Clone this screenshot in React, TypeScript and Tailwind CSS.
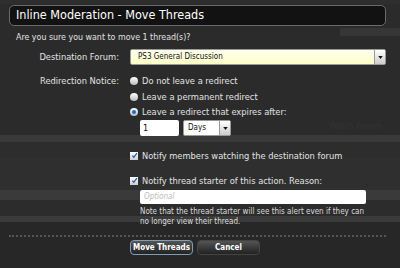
import React from "react";

const Radio = ({ checked }: { checked?: boolean }) => (
	<span className="inline-flex h-[8px] w-[8px] shrink-0 items-center justify-center rounded-full bg-gradient-to-b from-white to-[#bbb]">
		{checked && <span className="h-[4px] w-[4px] rounded-full bg-[#1a6fc0]" />}
	</span>
);

const Check = () => (
	<span className="inline-flex h-[8px] w-[8px] shrink-0 items-center justify-center bg-gradient-to-b from-white to-[#ccc]">
		<svg viewBox="0 0 8 8" className="h-[7px] w-[7px]">
			<path d="M1.5 4.2 L3.2 6 L6.8 1.2" fill="none" stroke="#2457b8" strokeWidth="1.4" />
		</svg>
	</span>
);

const Arrow = () => (
	<span className="flex h-full w-[11px] items-center justify-center border-l border-[#999] bg-gradient-to-b from-white to-[#ccc]">
		<svg viewBox="0 0 6 4" className="h-[3px] w-[5px]">
			<path d="M0 0 H6 L3 4 Z" fill="#111" />
		</svg>
	</span>
);

const Background = () => (
	<div className="flex h-[268px] flex-col bg-[#2b2b2b] text-[#333] [font-family:'DejaVu_Sans_Condensed','DejaVu_Sans',sans-serif]">
		<div className="h-[4px] bg-[#2e2e2e]" />
		<div className="h-[24px]" />
		<div className="ml-auto h-[8px] w-[60px] bg-[#363636]" />
		<div className="h-[84px]" />
		<div className="flex h-[13px] items-center justify-end pr-[18px] text-[9px]">Watch Forum</div>
		<div className="h-[2px]" />
		<div className="h-[7px] bg-[#3a3a3a]" />
		<div className="h-[16px] bg-[#2d2d2d]" />
		<div className="h-[32px] bg-[#2f2f2f]" />
		<div className="h-[10px] bg-[#3a3a3a]" />
		<div className="h-[16px] bg-[#2c2c2c]" />
		<div className="h-[6px] bg-[#3b3b3b]" />
		<div className="flex-1 bg-[#272727]" />
	</div>
);

export default function App() {
	return (
		<div className="relative h-[268px] w-[400px] overflow-hidden">
			<Background />
			<div className="absolute inset-0 flex flex-col pl-[9px] pr-[14px] pt-[5px] text-[9.25px] leading-none text-[#e2e2e2] [font-family:'DejaVu_Sans_Condensed','DejaVu_Sans',sans-serif]">
				<div className="flex h-[21px] items-center rounded-[5px] border border-[#6a6a6a] bg-[#121212] pl-[6px] text-[12.5px] text-white">
					Inline Moderation - Move Threads
				</div>
				<div className="mt-[6px] flex h-[11px] items-center pl-[7px] text-[8.8px]">Are you sure you want to move 1 thread(s)?</div>

				<div className="mt-[6px] grid grid-cols-[110px_1fr] gap-x-[11px]">
					<div className="flex h-[16px] items-center justify-end">Destination Forum:</div>
					<div className="flex h-[16px] items-stretch overflow-hidden rounded-[2px] border border-[#999] bg-gradient-to-b from-[#ffffef] to-[#ffffc8]">
						<span className="flex flex-1 items-center pl-[7px] text-[8px] text-[#111]">PS3 General Discussion</span>
						<Arrow />
					</div>

					<div className="mt-[9px] flex h-[13px] items-center justify-end">Redirection Notice:</div>
					<div className="mt-[9px] flex flex-col">
						<label className="flex h-[13px] items-center gap-[4px]"><Radio />Do not leave a redirect</label>
						<label className="mt-[3px] flex h-[13px] items-center gap-[4px]"><Radio />Leave a permanent redirect</label>
						<label className="mt-[2px] flex h-[13px] items-center gap-[4px]"><Radio checked />Leave a redirect that expires after:</label>
						<div className="mt-[2px] flex gap-[4px] pl-[10px]">
							<span className="flex h-[16px] w-[39px] items-center rounded-[2px] bg-white pl-[3px] text-[9px] text-[#111]">1</span>
							<span className="flex h-[16px] w-[48px] items-stretch overflow-hidden rounded-[2px] border border-[#999] bg-white">
								<span className="flex flex-1 items-center pl-[4px] text-[8px] text-[#111]">Days</span>
								<Arrow />
							</span>
						</div>
						<label className="mt-[13px] flex h-[13px] items-center gap-[4px]"><Check />Notify members watching the destination forum</label>
						<label className="mt-[12px] flex h-[13px] items-center gap-[4px]"><Check />Notify thread starter of this action. Reason:</label>
						<div className="ml-[10px] mt-[3px] flex h-[14px] w-[226px] items-center rounded-[2px] bg-white pl-[4px] text-[8px] italic text-[#bbb]">Optional</div>
						<p className="ml-[10px] mt-[3px] whitespace-nowrap text-[8px] leading-[10px] text-[#dcdcdc]">
							Note that the thread starter will see this alert even if they can<br />no longer view their thread.
						</p>
					</div>
				</div>

				<div className="mt-[8px] border-t-2 border-dotted border-[#555]" />
				<div className="mt-[3px] flex gap-[4px] pl-[121px]">
					<button className="h-[15px] w-[63px] whitespace-nowrap rounded-[4px] border border-[#7e9db6] bg-gradient-to-b from-[#555] to-[#222] text-[8px] font-bold text-white">Move Threads</button>
					<button className="h-[15px] w-[63px] whitespace-nowrap rounded-[4px] border border-[#444] bg-gradient-to-b from-[#555] to-[#222] text-[8px] font-bold text-white">Cancel</button>
				</div>
			</div>
		</div>
	);
}
